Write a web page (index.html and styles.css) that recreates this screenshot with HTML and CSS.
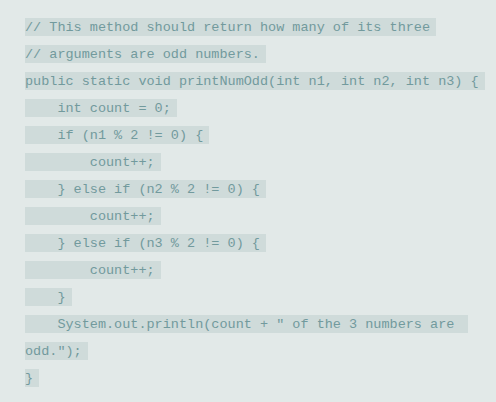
FILE: index.html
```html
<!DOCTYPE html>
<html>
<head>
<meta charset="utf-8">
<link rel="stylesheet" href="styles.css">
</head>
<body>
<div class="code">
<div class="line"><span class="hl">// This method should return how many of its three</span></div>
<div class="line"><span class="hl">// arguments are odd numbers.</span></div>
<div class="line"><span class="hl">public static void printNumOdd(int n1, int n2, int n3) {</span></div>
<div class="line"><span class="hl">    int count = 0;</span></div>
<div class="line"><span class="hl">    if (n1 % 2 != 0) {</span></div>
<div class="line"><span class="hl">        count++;</span></div>
<div class="line"><span class="hl">    } else if (n2 % 2 != 0) {</span></div>
<div class="line"><span class="hl">        count++;</span></div>
<div class="line"><span class="hl">    } else if (n3 % 2 != 0) {</span></div>
<div class="line"><span class="hl">        count++;</span></div>
<div class="line"><span class="hl">    }</span></div>
<div class="line"><span class="hl">    System.out.println(count + " of the 3 numbers are </span></div>
<div class="line"><span class="hl">odd.");</span></div>
<div class="line"><span class="hl">}</span></div>
</div>
</body>
</html>
```
FILE: styles.css
```css
html, body {
  margin: 0;
  padding: 0;
  background: #e2e9e8;
}
body {
  width: 496px;
  height: 402px;
  overflow: hidden;
}
.code {
  display: flex;
  flex-direction: column;
  gap: 9px;
  padding: 18px 0 0 25px;
}
.line {
  height: 18px;
  display: flex;
}
.hl {
  display: inline-block;
  height: 18px;
  line-height: 19px;
  padding-right: 6px;
  background: #cfdbda;
  color: #729a9d;
  font-family: "Liberation Mono", "Courier New", monospace;
  font-size: 13.5px;
  white-space: pre;
}
```
